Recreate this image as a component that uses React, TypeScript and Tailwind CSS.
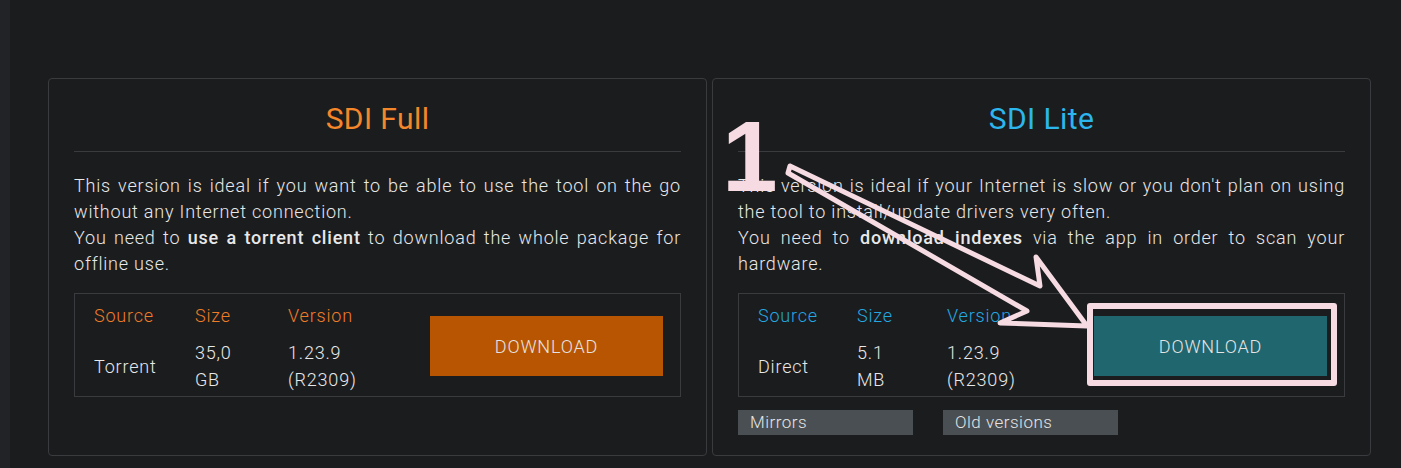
import type { ReactNode } from 'react';

type CardProps = {
  title: string;
  titleColor: string;
  headColor: string;
  buttonColor: string;
  source: string;
  size: [string, string];
  cols: [string, string];
  children: ReactNode;
  extra?: ReactNode;
};

function Card({ title, titleColor, headColor, buttonColor, source, size, cols, children, extra }: CardProps) {
  return (
    <div className="w-[659px] h-[378px] border border-[#3a3b3e] rounded-[4px] px-[25px]">
      {/* Title */}
      <h2 className={`pt-[22px] text-center text-[30px] leading-[36px] font-normal tracking-[0.4px] ${titleColor}`}>{title}</h2>
      <div className="mt-[14px] border-t border-[#3a3b3e]" />

      {/* Description */}
      <p className="mt-[21px] h-[104px] text-[18px] leading-[26px] font-light tracking-[0.8px] text-justify text-[#e8e8e8]">
        {children}
      </p>

      {/* Download table */}
      <div className="mt-[16px] h-[104px] border border-[#3a3b3e] flex items-center pl-[19px] pr-[17px]">
        <div className="flex-1 flex flex-col pt-[6px] text-[18px] font-light tracking-[0.8px]">
          <div className={`flex leading-[26px] ${headColor}`}>
            <span className={cols[0]}>Source</span>
            <span className={cols[1]}>Size</span>
            <span>Version</span>
          </div>
          <div className="flex items-center leading-[27px] text-[#e8e8e8] mt-[10px]">
            <span className={cols[0]}>{source}</span>
            <span className={`flex flex-col ${cols[1]}`}>
              <span>{size[0]}</span>
              <span>{size[1]}</span>
            </span>
            <span className="flex flex-col">
              <span>1.23.9</span>
              <span>(R2309)</span>
            </span>
          </div>
        </div>
        <button className={`mt-[2px] w-[233px] h-[60px] text-[18px] font-light tracking-[0.8px] text-[#e4e4e4] ${buttonColor}`}>
          DOWNLOAD
        </button>
      </div>
      {extra}
    </div>
  );
}

export default function App() {
  return (
    <div
      className="relative w-full h-[468px] bg-[#1b1c1e] flex overflow-hidden"
      style={{ fontFamily: 'Roboto, "Liberation Sans", sans-serif' }}
    >
      <div className="w-[10px] h-full bg-[#222326]" />
      <div className="pt-[78px] pl-[38px] flex gap-[5px]">
        <Card
          title="SDI Full"
          titleColor="text-[#f6862a]"
          headColor="text-[#f07c28]"
          buttonColor="bg-[#b85502]"
          source="Torrent"
          size={['35,0', 'GB']}
          cols={['w-[101px]', 'w-[93px]']}
        >
          This version is ideal if you want to be able to use the tool on the go without any Internet connection.
          <br />
          You need to <b className="font-medium">use a torrent client</b> to download the whole package for offline use.
        </Card>
        <Card
          title="SDI Lite"
          titleColor="text-[#2bb6ee]"
          headColor="text-[#24a8e2]"
          buttonColor="bg-[#1f666f]"
          source="Direct"
          size={['5.1', 'MB']}
          cols={['w-[99px]', 'w-[90px]']}
          extra={
            <div className="mt-[13px] flex gap-[30px] text-[17px] font-light tracking-[0.5px] text-[#e4e4e4]">
              <span className="w-[175px] h-[25px] leading-[25px] pl-[12px] bg-[#4a4f53]">Mirrors</span>
              <span className="w-[175px] h-[25px] leading-[25px] pl-[12px] bg-[#4a4f53]">Old versions</span>
            </div>
          }
        >
          This version is ideal if your Internet is slow or you don't plan on using the tool to install/update drivers very often.
          <br />
          You need to <b className="font-medium">download indexes</b> via the app in order to scan your hardware.
        </Card>
      </div>

      {/* Annotation overlay */}
      <span
        className="absolute left-[722px] top-[106px] text-[100px] leading-[100px] font-bold text-[#f6dbe3]"
        style={{ fontFamily: '"Liberation Sans", Arial, sans-serif' }}
      >
        1
      </span>
      <svg className="absolute left-0 top-0 pointer-events-none" width="1401" height="468">
        <polygon
          points="790,166 1040,286 1036,257 1087,326 1000,323 1027,311 788,173"
          fill="none"
          stroke="#f6dbe3"
          strokeWidth="5"
          strokeLinejoin="round"
        />
      </svg>
      <div className="absolute left-[1087px] top-[303px] w-[250px] h-[83px] border-[6px] border-[#f6dbe3] rounded-[3px] pointer-events-none" />
    </div>
  );
}
